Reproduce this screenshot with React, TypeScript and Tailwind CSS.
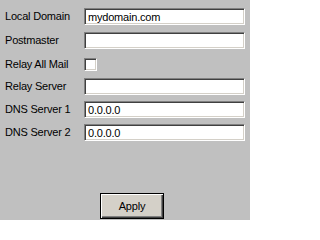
import React from "react";

const inset =
  "border border-t-[#808080] border-l-[#808080] border-b-white border-r-white shadow-[inset_1px_1px_0_#404040,inset_-1px_-1px_0_#d4d0c8] bg-white";

function Row({ label, children, className = "" }: { label: string; children: React.ReactNode; className?: string }) {
  return (
    <div className={`flex items-center h-[17px] ${className}`}>
      <div className="w-[79px] shrink-0">{label}</div>
      {children}
    </div>
  );
}

function Input({ value = "" }: { value?: string }) {
  return (
    <div className={`${inset} w-[161px] h-[17px] flex items-center pl-[3px] pt-[1px] leading-none`}>
      {value}
    </div>
  );
}

export default function App() {
  return (
    <div
      className="w-[250px] h-[220px] bg-[#c0c0c0] text-black text-[11px] tracking-[-0.2px] flex flex-col pl-[5px] pt-[8px]"
      style={{ fontFamily: '"Liberation Sans", Arial, sans-serif' }}
    >
      <div className="flex flex-col">
        <Row label="Local Domain">
          <Input value="mydomain.com" />
        </Row>
        <Row label="Postmaster" className="mt-[7px]">
          <Input />
        </Row>
        <Row label="Relay All Mail" className="mt-[7px]">
          <div className={`${inset} w-[13px] h-[13px]`} />
        </Row>
        <Row label="Relay Server" className="mt-[5px]">
          <Input />
        </Row>
        <Row label="DNS Server 1" className="mt-[6px]">
          <Input value="0.0.0.0" />
        </Row>
        <Row label="DNS Server 2" className="mt-[6px]">
          <Input value="0.0.0.0" />
        </Row>
      </div>
      <div className="mt-auto mb-[1px] flex">
        <button className="ml-[95px] w-[64px] h-[26px] border border-black bg-[#d4d0c8] shadow-[inset_1px_1px_0_#ffffff,inset_-1px_-1px_0_#404040,inset_-2px_-2px_0_#808080] text-[11px]">
          Apply
        </button>
      </div>
    </div>
  );
}
